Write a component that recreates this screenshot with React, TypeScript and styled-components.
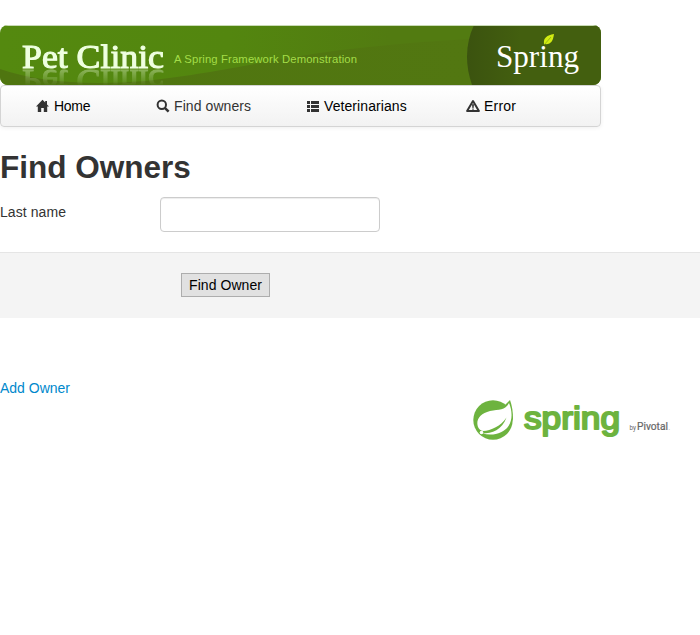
import React from "react";
import styled, { createGlobalStyle } from "styled-components";

const GlobalStyle = createGlobalStyle`
  * { box-sizing: border-box; }
  body {
    margin: 0;
    background: #fff;
    color: #333;
    font: 14px/20px "Liberation Sans", Arial, sans-serif;
  }
`;

const Page = styled.div`
  padding-top: 25px;
  min-height: 635px;
  overflow: hidden;
`;

const Banner = styled.header`
  position: relative;
  display: flex;
  align-items: flex-start;
  width: 601px;
  height: 60px;
  border-radius: 8px;
  overflow: hidden;
`;

const BannerBackdrop = styled.svg`
  position: absolute;
  inset: 0;
  width: 601px;
  height: 60px;
`;

const Wordmark = styled.svg`
  position: relative;
  width: 150px;
  height: 52px;
  margin-left: 20px;
  -webkit-box-reflect: below -16px linear-gradient(transparent 52%, rgba(0, 0, 0, 0.38) 85%);
`;

const Tagline = styled.svg`
  position: relative;
  width: 190px;
  height: 60px;
`;

const SpringMark = styled.svg`
  position: relative;
  width: 100px;
  height: 60px;
  margin-left: 130px;
`;

const NavBar = styled.nav`
  display: grid;
  grid-template-columns: 120px 150px 160px 100px;
  align-items: center;
  width: 601px;
  height: 42px;
  padding-left: 35px;
  border: 1px solid #d4d4d4;
  border-radius: 4px;
  background: linear-gradient(#fff, #f2f2f2);
  box-shadow: 0 1px 4px rgba(0, 0, 0, 0.065);
`;

const NavLink = styled.a<{ $muted?: boolean; $spacing?: number }>`
  display: flex;
  align-items: center;
  gap: 4px;
  color: ${(p) => (p.$muted ? "#333" : "#000")};
  letter-spacing: ${(p) => p.$spacing ?? 0.08}px;
  text-decoration: none;
`;

const NavIcon = styled.svg`
  width: 14px;
  height: 14px;
  fill: #333;
`;

const Title = styled.h2`
  margin: 20px 0 10px;
  font-size: 31.5px;
  line-height: 40px;
`;

const Field = styled.div`
  display: flex;
  align-items: flex-start;
`;

const Label = styled.label`
  width: 160px;
  padding-top: 5px;
  letter-spacing: 0.08px;
`;

const TextInput = styled.input`
  width: 220px;
  height: 35px;
  padding: 4px 6px;
  border: 1px solid #ccc;
  border-radius: 4px;
  background: #fff;
  box-shadow: inset 0 1px 1px rgba(0, 0, 0, 0.075);
`;

const Actions = styled.div`
  height: 66px;
  margin-top: 20px;
  padding: 20px 0 0 181px;
  border-top: 1px solid #e5e5e5;
  background: #f4f4f4;
`;

const Button = styled.button`
  display: block;
  width: 89px;
  height: 24px;
  padding: 0;
  border: 1px solid #adadad;
  border-radius: 0;
  background: #e1e1e1;
  color: #000;
  font: inherit;
  letter-spacing: 0.06px;
`;

const AddLink = styled.a`
  display: block;
  width: max-content;
  margin-top: 60px;
  color: #0088cc;
  text-decoration: none;
`;

const FooterLogo = styled.svg`
  display: block;
  width: 206px;
  height: 56px;
  margin: -2px 0 0 470px;
`;

const BannerArt = () => (
  <Banner>
    <BannerBackdrop viewBox="0 0 601 60" aria-hidden="true">
      <defs>
        <linearGradient id="green">
          <stop offset="0" stopColor="#54890f" />
          <stop offset="0.38" stopColor="#53860f" />
          <stop offset="0.65" stopColor="#527b11" />
        </linearGradient>
        <linearGradient id="panel">
          <stop offset="0" stopColor="#3b530f" />
          <stop offset="0.4" stopColor="#435f0f" />
        </linearGradient>
        <linearGradient id="hill">
          <stop offset="0" stopColor="#4f7510" />
          <stop offset="1" stopColor="#527711" />
        </linearGradient>
      </defs>
      <rect width="601" height="60" fill="url(#green)" />
      <path d="M0 44Q55 63 145 56C260 43 290 24 470 14V60H0Z" fill="url(#hill)" />
      <path d="M474 0H601V60H472Q461 28 474 0Z" fill="url(#panel)" />
      <path d="M0 0.5H601" stroke="#c9dbb5" />
    </BannerBackdrop>
    <Wordmark viewBox="0 0 150 52">
      <text x="2" y="43" textLength="142" lengthAdjust="spacingAndGlyphs" fontFamily="'Liberation Serif', serif" fontSize="34" fill="#efffe0" stroke="#efffe0" strokeWidth="1.1">Pet Clinic</text>
    </Wordmark>
    <Tagline viewBox="0 0 190 60">
      <text x="4" y="38" fontFamily="'Liberation Sans', Arial, sans-serif" fontSize="11.3" textLength="183" fill="#a3dd48">A Spring Framework Demonstration</text>
    </Tagline>
    <SpringMark viewBox="0 0 100 60">
      <text x="6" y="42" fontFamily="'Liberation Serif', serif" fontSize="32" textLength="83" lengthAdjust="spacingAndGlyphs" fill="#fff">Spring</text>
      <path d="M54 19C53 13 57 10 64 9C63 16 61 20 54 19Z" fill="#d2ec12" />
      <path d="M54 20L61 12" stroke="#829d14" strokeWidth="0.7" />
    </SpringMark>
  </Banner>
);

const HomeIcon = () => (
  <NavIcon viewBox="0 0 14 14"><path d="M6.5 0.7L0 7.5H1.8V13H5.2V9H7.8V13H11.2V7.5H13L11 5.4V2H9.2V3.5Z" /></NavIcon>
);
const SearchIcon = () => (
  <NavIcon viewBox="0 0 14 14">
    <circle cx="5.8" cy="5.8" r="4.2" fill="none" stroke="#333" strokeWidth="2" />
    <path d="M8.8 8.8L12.6 12.6" stroke="#333" strokeWidth="2.5" />
  </NavIcon>
);
const ListIcon = () => (
  <NavIcon viewBox="0 0 14 14" shapeRendering="crispEdges"><path d="M1 2H4V5H1ZM5 2H13V5H5ZM1 6H4V9H1ZM5 6H13V9H5ZM1 10H4V13H1ZM5 10H13V13H5Z" /></NavIcon>
);
const WarningIcon = () => (
  <NavIcon viewBox="0 0 14 14">
    <path d="M7 2L12.9 12H1.1Z" fill="none" stroke="#333" strokeWidth="2" strokeLinejoin="round" />
    <path d="M6 5.3H8L7.6 8.9H6.4ZM6.3 9.4H7.7V10.8H6.3Z" />
  </NavIcon>
);

const SpringLogo = () => (
  <FooterLogo viewBox="470 396 206 56" role="img" aria-label="spring by Pivotal">
    <circle cx="493" cy="420" r="19.7" fill="#6db33f" />
    <path d="M505 405L510 400Q513 408 513 419L508 428Z" fill="#6db33f" />
    <path d="M509 403C505 411 499 409 490 411C480 413.5 475.5 420 478 427Q479.5 430.5 483 431C491 430.5 501 426 506.5 417.5C502 430 492 433.5 482.5 433.5C493 436.5 504 433 508.5 426C513 419 512 410 509 403Z" fill="#fff" />
    <circle cx="481.5" cy="432.5" r="1.8" fill="#fff" />
    <text x="524" y="429" fontFamily="'Liberation Sans', Arial, sans-serif" fontSize="32" textLength="96" lengthAdjust="spacingAndGlyphs" fill="#6db33f" stroke="#6db33f" strokeWidth="2" strokeLinejoin="round">spring</text>
    <g fontFamily="Roboto, sans-serif" fill="#666">
      <text x="629.5" y="430" fontSize="7" textLength="6.5" lengthAdjust="spacingAndGlyphs">by</text>
      <text x="637" y="430" fontSize="10" textLength="31" lengthAdjust="spacingAndGlyphs" stroke="#666" strokeWidth="0.2">Pivotal</text>
      <text x="668.5" y="430" fontSize="6">.</text>
    </g>
  </FooterLogo>
);

export default function App() {
  return (
    <>
      <GlobalStyle />
      <Page>
        <BannerArt />
        <NavBar>
          <NavLink $spacing={-0.3}><HomeIcon />Home</NavLink>
          <NavLink $muted><SearchIcon />Find owners</NavLink>
          <NavLink><ListIcon />Veterinarians</NavLink>
          <NavLink $spacing={0.2}><WarningIcon />Error</NavLink>
        </NavBar>
        <Title>Find Owners</Title>
        <form onSubmit={(e) => e.preventDefault()}>
          <Field>
            <Label htmlFor="lastName">Last name</Label>
            <TextInput id="lastName" />
          </Field>
          <Actions><Button type="submit">Find Owner</Button></Actions>
        </form>
        <AddLink>Add Owner</AddLink>
        <SpringLogo />
      </Page>
    </>
  );
}
